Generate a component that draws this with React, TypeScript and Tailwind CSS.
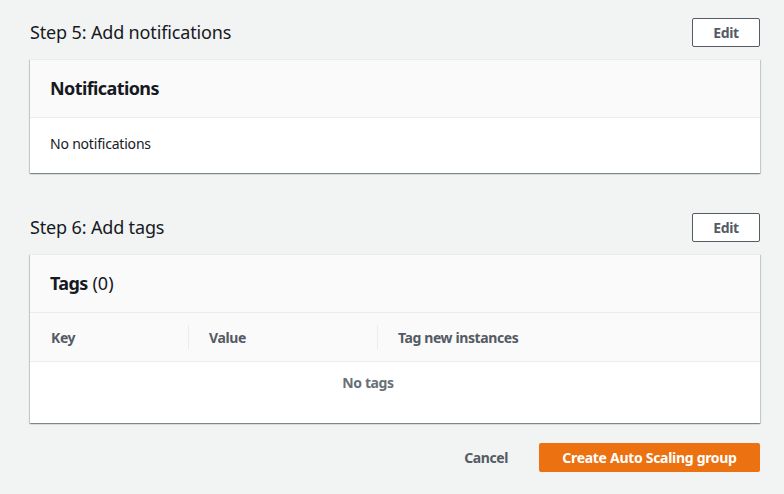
import React from "react";

function EditButton() {
  return (
    <button className="h-[29px] w-[68px] rounded-[2px] border border-[#545b64] bg-white text-[14px] font-bold tracking-[-0.4px] text-[#545b64] leading-none">
      Edit
    </button>
  );
}

function StepHeader({ title }: { title: string }) {
  return (
    <div className="flex items-center justify-between">
      <h2 className="text-[18px] font-normal tracking-[-0.15px] text-[#16191f] leading-[29px]">{title}</h2>
      <EditButton />
    </div>
  );
}

const cardCls =
  "mt-3 bg-white border-t border-[#eaeded] shadow-[0_1px_1px_0_rgba(0,28,36,0.3),1px_1px_1px_0_rgba(0,28,36,0.15),-1px_1px_1px_0_rgba(0,28,36,0.15)]";

export default function App() {
  return (
    <div
      className="min-h-[494px] w-[784px] bg-[#f2f3f3] px-[30px] pt-[18px] pr-[24px]"
      style={{ fontFamily: '"Noto Sans", "Open Sans", Arial, sans-serif' }}
    >
      <StepHeader title="Step 5: Add notifications" />
      <div className={cardCls}>
        <div className="flex h-[58px] items-center border-b border-[#eaeded] bg-[#fafafa] px-5">
          <h3 className="text-[18px] font-bold tracking-[-0.6px] text-[#16191f]">Notifications</h3>
        </div>
        <div className="flex h-[55px] items-center px-5 pb-[4px] text-[14px] tracking-[-0.2px] text-[#16191f]">No notifications</div>
      </div>

      <div className="mt-[40px]">
        <StepHeader title="Step 6: Add tags" />
      </div>
      <div className={cardCls}>
        <div className="flex h-[58px] items-center border-b border-[#eaeded] bg-[#fafafa] px-5">
          <h3 className="text-[18px] text-[#16191f]">
            <span className="font-bold tracking-[-0.6px]">Tags</span> <span className="font-normal">(0)</span>
          </h3>
        </div>
        <div className="flex h-[49px] items-center border-b border-[#eaeded] bg-[#fafafa] text-[14px] font-bold tracking-[-0.4px] text-[#545b64]">
          <div className="w-[158px] pl-[21px]">Key</div>
          <div className="flex h-[24px] w-[189px] items-center border-l border-[#eaeded] pl-[20px]">Value</div>
          <div className="flex h-[24px] flex-1 items-center border-l border-[#eaeded] pl-[20px]">Tag new instances</div>
        </div>
        <div className="flex h-[61px] justify-center pr-[54px] pt-[10px] text-[14px] font-bold tracking-[-0.4px] text-[#687078]">No tags</div>
      </div>

      <div className="mt-5 flex items-center justify-end">
        <button className="mr-[31px] text-[14px] font-bold tracking-[-0.4px] text-[#545b64]">Cancel</button>
        <button className="h-[29px] w-[221px] rounded-[2px] bg-[#ec7211] text-[14px] font-bold tracking-[-0.3px] text-white">
          Create Auto Scaling group
        </button>
      </div>
    </div>
  );
}
